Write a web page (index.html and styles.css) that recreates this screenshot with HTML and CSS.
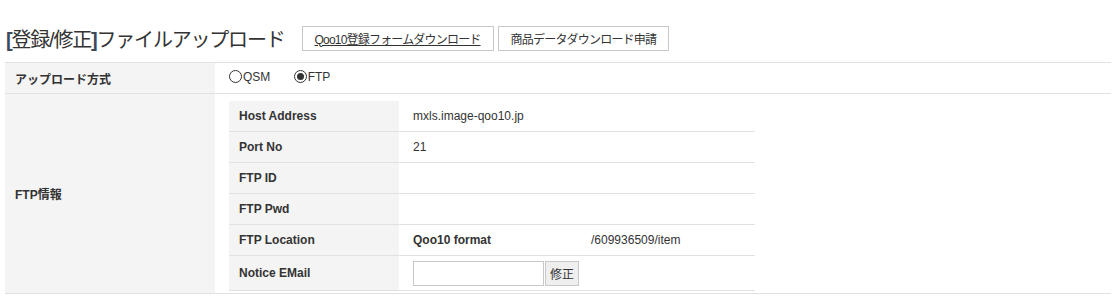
FILE: index.html
```html
<!DOCTYPE html>
<html lang="ja">
<head>
    <meta charset="UTF-8">
    <title>ファイルアップロード</title>
    <link rel="stylesheet" href="styles.css">
</head>
<body>
    <div class="wrap">
        <!-- タイトル -->
        <div class="title-bar">
            <h2 class="page-title"><span class="br">[</span>登録/修正<span class="br">]</span>ファイルアップロード</h2>
            <a class="btn btn-link" href="#">Qoo10登録フォームダウンロード</a>
            <a class="btn" href="#">商品データダウンロード申請</a>
        </div>

        <!-- アップロード設定 -->
        <table class="form-table">
            <tr>
                <th>アップロード方式</th>
                <td>
                    <label class="radio"><span class="dot"></span>QSM</label>
                    <label class="radio on"><span class="dot"></span>FTP</label>
                </td>
            </tr>
            <tr class="ftp-row">
                <th>FTP情報</th>
                <td class="ftp-cell">
                    <table class="info-table">
                        <tr><th>Host Address</th><td>mxls.image-qoo10.jp</td></tr>
                        <tr><th>Port No</th><td>21</td></tr>
                        <tr><th>FTP ID</th><td></td></tr>
                        <tr><th>FTP Pwd</th><td></td></tr>
                        <tr>
                            <th>FTP Location</th>
                            <td><span class="loc-name">Qoo10 format</span><span class="loc-path">/609936509/item</span></td>
                        </tr>
                        <tr class="mail-row">
                            <th>Notice EMail</th>
                            <td><input class="mail-input" type="text"><button class="mail-btn">修正</button></td>
                        </tr>
                    </table>
                </td>
            </tr>
        </table>
    </div>
</body>
</html>
```

FILE: styles.css
```css
/* 基本 */
body {
    margin: 0;
    padding: 0;
    background: #fff;
    color: #333;
    font-family: 'Liberation Sans', 'Noto Sans CJK JP', sans-serif;
    font-size: 12px;
}

.wrap {
    padding: 0 1px 0 5px;
}

/* タイトル */
.title-bar {
    display: flex;
    align-items: center;
    height: 26px;
    padding-top: 25px;
    margin-bottom: 11px;
}
.page-title {
    margin: 0 17px 0 1px;
    font-size: 20px;
    font-weight: normal;
    letter-spacing: -1.2px;
    color: #333;
}
.page-title .br {
    color: #3b4a5c;
    font-weight: bold;
}

.btn {
    display: inline-flex;
    align-items: center;
    height: 23px;
    padding: 0 12px;
    margin-right: 4px;
    border: 1px solid #c8c8c8;
    background: #fff;
    color: #333;
    font-size: 12px;
    letter-spacing: -0.8px;
    text-decoration: none;
}
.btn-link {
    text-decoration: underline;
}

/* フォームテーブル */
.form-table {
    width: 100%;
    border-collapse: collapse;
    border-top: 1px solid #e1e1e1;
}
.form-table > tbody > tr > th,
.form-table > tbody > tr > td {
    border-bottom: 1px solid #e1e1e1;
    height: 30px;
    padding: 0 14px 0 10px;
    text-align: left;
    vertical-align: middle;
}
.form-table > tbody > tr > th {
    width: 186px;
    background: #f4f4f4;
    font-weight: bold;
}
.form-table > tbody > tr > td {
    padding-left: 14px;
}

/* ラジオ */
.radio {
    display: inline-flex;
    align-items: center;
    margin-right: 20px;
    line-height: 14px;
}
.radio .dot {
    width: 11px;
    height: 11px;
    border: 1px solid #333;
    border-radius: 50%;
    margin-right: 1px;
    position: relative;
}
.radio.on .dot::after {
    content: '';
    position: absolute;
    left: 2px;
    top: 2px;
    width: 7px;
    height: 7px;
    border-radius: 50%;
    background: #333;
}

/* FTP情報 */
.form-table > tbody > tr > td.ftp-cell {
    padding: 7px 14px 2px 14px;
}
.info-table {
    width: 526px;
    border-collapse: collapse;
}
.info-table th,
.info-table td {
    height: 30px;
    border-bottom: 1px solid #e1e1e1;
    text-align: left;
    vertical-align: middle;
    padding: 0 14px;
}
.info-table th {
    width: 146px;
    background: #f4f4f4;
    font-weight: bold;
    padding-left: 10px;
}
.info-table .mail-row th,
.info-table .mail-row td {
    height: 34px;
}

.loc-name {
    display: inline-block;
    width: 178px;
    font-weight: bold;
}

.mail-input {
    width: 127px;
    height: 21px;
    border: 1px solid #c8c8c8;
    padding: 1px;
    margin: 0;
    vertical-align: middle;
}
.mail-btn {
    height: 25px;
    margin: 0 0 0 1px;
    padding: 0 4px;
    border: 1px solid #c8c8c8;
    background: #efefef;
    color: #333;
    font-family: 'Liberation Sans', 'Noto Sans CJK JP', sans-serif;
    font-size: 12px;
    vertical-align: middle;
}
```
